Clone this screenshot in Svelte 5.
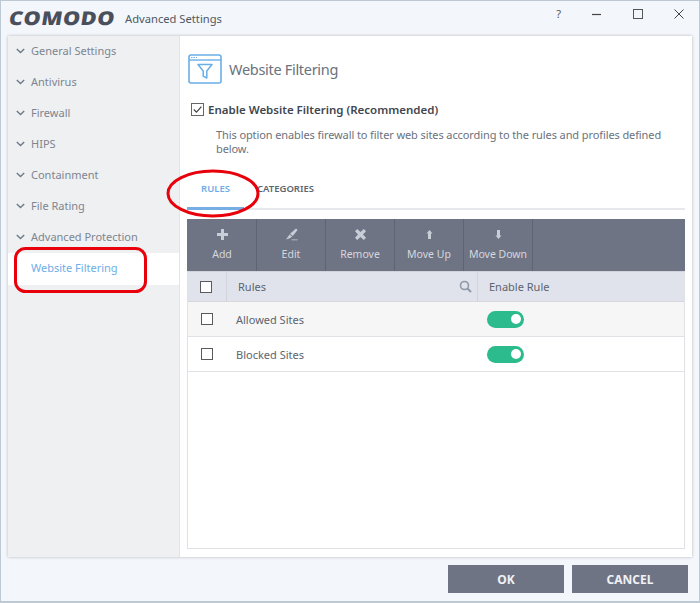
<script>
	const menu = ['General Settings', 'Antivirus', 'Firewall', 'HIPS', 'Containment', 'File Rating', 'Advanced Protection'];
	const tools = [
		{ label: 'Add', icon: 'M5 1h3v4h4v3H8v4H5V8H1V5h4z' },
		{ label: 'Edit', icon: 'M11 .5l1.600 1.400-4.800 6-2.800-2.200zM4.600 6.500l2.600 2.100-2.400 1.700-3.800 1.200zM6.500 11.400h6v.8h-6z' },
		{ label: 'Remove', icon: 'M3.200 1l3.300 3 3.300-3 2.200 2.200-3 3.300 3 3.300-2.200 2.200-3.300-3-3.300 3L1 9.800l3-3.300-3-3.300z' },
		{ label: 'Move Up', icon: 'M6.500 2l3 3.600H8V11H5V5.600H3.500z' },
		{ label: 'Move Down', icon: 'M5 2h3v5.400h1.500l-3 3.600-3-3.600H5z' }
	];
	const rows = ['Allowed Sites', 'Blocked Sites'];
</script>

<div class="window">
	<header class="titlebar">
		<span class="logo">COMODO</span>
		<span class="app-title">Advanced Settings</span>
		<div class="controls">
			<span class="help">?</span>
			<svg width="12" height="12" viewBox="0 0 12 12"><path d="M1 6.500h9" stroke="#444" stroke-width="1.200" /></svg>
			<svg width="12" height="12" viewBox="0 0 12 12"><rect x="1.500" y="1.500" width="9" height="9" fill="none" stroke="#555" stroke-width="1" /></svg>
			<svg width="12" height="12" viewBox="0 0 12 12"><path d="M1.500 1.500l9 9M10.500 1.500l-9 9" stroke="#444" stroke-width="1" /></svg>
		</div>
	</header>

	<div class="panel">
		<nav class="sidebar">
			{#each menu as item}
				<div class="nav-item">
					<svg class="chevron" width="9" height="6" viewBox="0 0 9 6"><path d="M.8 1l3.700 3.600L8.200 1" fill="none" stroke="#6d7a88" stroke-width="1.400" /></svg>
					<span>{item}</span>
				</div>
			{/each}
			<div class="nav-item active"><span>Website Filtering</span></div>
		</nav>

		<main class="content">
			<div class="heading">
				<svg width="34" height="30" viewBox="0 0 34 30">
					<rect x="1" y="1" width="32" height="28" rx="2" fill="#fff" stroke="#6aaee8" stroke-width="1.600" />
					<path d="M1 6h32" stroke="#6aaee8" stroke-width="1.400" />
					<path d="M3 3.500h6" stroke="#6aaee8" stroke-width="1.200" stroke-dasharray="1.500 1" />
					<path d="M10 10.500h14l-5.200 6.500v7l-3.600-1.800V17z" fill="none" stroke="#6aaee8" stroke-width="1.500" stroke-linejoin="round" />
				</svg>
				<h1>Website Filtering</h1>
			</div>

			<div class="enable">
				<svg width="13" height="13" viewBox="0 0 13 13">
					<rect x=".5" y=".5" width="12" height="12" fill="#fff" stroke="#666" />
					<path d="M2.800 6.500l2.700 2.700 4.900-5.600" fill="none" stroke="#444" stroke-width="1.200" />
				</svg>
				<span>Enable Website Filtering (Recommended)</span>
			</div>
			<p class="desc">This option enables firewall to filter web sites according to the rules and profiles defined below.</p>

			<div class="tabs">
				<span class="tab active">RULES</span>
				<span class="tab second">CATEGORIES</span>
			</div>

			<div class="toolbar">
				{#each tools as tool}
					<div class="tool">
						<svg width="13" height="13" viewBox="0 0 13 13"><path d={tool.icon} fill="#c9cdd6" /></svg>
						<span>{tool.label}</span>
					</div>
				{/each}
			</div>

			<div class="table">
				<div class="thead">
					<div class="cell-check"><span class="box"></span></div>
					<div class="cell-name">
						<span>Rules</span>
						<svg width="13" height="13" viewBox="0 0 13 13"><circle cx="5.500" cy="5.500" r="4" fill="none" stroke="#8d99a6" stroke-width="1.600" /><path d="M8.500 8.500l3.500 3.500" stroke="#8d99a6" stroke-width="2" /></svg>
					</div>
					<div class="cell-toggle">Enable Rule</div>
				</div>
				{#each rows as row, i}
					<div class="row" class:shaded={i === 0}>
						<div class="cell-check"><span class="box"></span></div>
						<div class="cell-name">{row}</div>
						<div class="cell-toggle"><span class="switch"><span class="knob"></span></span></div>
					</div>
				{/each}
			</div>
		</main>
	</div>

	<footer class="footer">
		<button type="button">OK</button>
		<button type="button">CANCEL</button>
	</footer>

	<svg class="marks" width="700" height="603" viewBox="0 0 700 603">
		<ellipse cx="213" cy="193.500" rx="45" ry="22.500" fill="none" stroke="#e8000b" stroke-width="3" />
		<rect x="15.500" y="248.500" width="130" height="43" rx="10" fill="none" stroke="#e8000b" stroke-width="3" />
	</svg>
</div>

<style>
	:global(body) {
		margin: 0;
	}

	.window {
		position: relative;
		box-sizing: border-box;
		width: 700px;
		height: 603px;
		display: flex;
		flex-direction: column;
		background: #f3f6fa;
		border: 1px solid #bcc8d2;
		border-bottom-width: 2px;
		font-family: 'Noto Sans', 'Open Sans', sans-serif;
		color: #5c6470;
		overflow: hidden;
	}

	.titlebar {
		height: 34px;
		flex: none;
		display: flex;
		align-items: center;
		padding: 0 9px 0 8px;
	}

	.logo {
		font: 800 19px/1 'Open Sans', 'Liberation Sans', sans-serif;
		letter-spacing: 0.5px;
		color: #4a4f5c;
		transform: skewX(-9deg) scaleX(1.14);
		transform-origin: left center;
		width: 116px;
	}

	.app-title {
		font-size: 11.200px;
		color: #4f5863;
	}

	.controls {
		margin-left: auto;
		display: flex;
		align-items: center;
		gap: 29px;
		padding-right: 5px;
		margin-top: -9px;
	}

	.help {
		font-size: 11px;
		color: #555;
		margin-right: 1px;
	}

	.panel {
		flex: 1;
		min-height: 0;
		margin: 1px 7px 0;
		display: flex;
		background: #fff;
		box-shadow: 0 0 3px rgba(0, 0, 0, 0.25);
	}

	.sidebar {
		width: 171px;
		flex: none;
		background: #eff0f2;
		border-right: 1px solid #e2e4e8;
	}

	.nav-item {
		box-sizing: border-box;
		height: 31px;
		display: flex;
		align-items: center;
		gap: 6px;
		padding: 0 0 2px 8px;
		font-size: 11px;
		color: #7d8590;
	}

	.nav-item.active {
		height: 32px;
		padding: 0 0 4px 23px;
		background: #fff;
		color: #6eaee6;
	}

	.content {
		flex: 1;
		min-width: 0;
		display: flex;
		flex-direction: column;
		padding: 17px 7px 8px 7px;
	}

	.heading {
		display: flex;
		align-items: center;
		gap: 7px;
		height: 31px;
		padding-left: 1px;
	}

	h1 {
		margin: 0;
		font-size: 14.500px;
		letter-spacing: -0.3px;
		font-weight: 400;
		color: #6a727d;
	}

	.enable {
		margin-top: 16px;
		padding-left: 4px;
		display: flex;
		align-items: center;
		gap: 4px;
		font-size: 11.500px;
		font-weight: 600;
		color: #3f4650;
		height: 18px;
	}

	.desc {
		margin: 10px 16px 0 29px;
		font-size: 11px;
		letter-spacing: -0.1px;
		line-height: 14px;
		color: #6a727d;
	}

	.tabs {
		margin-top: 10px;
		height: 44px;
		display: flex;
		box-sizing: border-box;
		border-bottom: 2px solid #e6e8ec;
	}

	.tab {
		height: 44px;
		box-sizing: border-box;
		display: flex;
		align-items: center;
		justify-content: center;
		font-size: 9.500px;
		font-weight: 600;
		color: #5c6470;
	}

	.tab.active {
		width: 57px;
		padding-top: 3px;
		color: #6eaee6;
		border-bottom: 3px solid #76ade2;
	}

	.tab.second {
		margin-left: 13px;
	}

	.toolbar {
		margin-top: 9px;
		height: 52px;
		flex: none;
		display: flex;
		padding-left: 1px;
		background: #6f7485;
	}

	.tool {
		box-sizing: border-box;
		width: 69px;
		display: flex;
		flex-direction: column;
		align-items: center;
		justify-content: center;
		gap: 6px;
		padding-bottom: 2px;
		border-right: 1px solid #5f6474;
		font-size: 10.500px;
		color: #d4d7de;
	}

	.table {
		flex: 1;
		min-height: 0;
		border: 1px solid #e0e1e4;
		border-top: 0;
	}

	.thead,
	.row {
		display: flex;
		align-items: stretch;
		font-size: 11px;
	}

	.thead {
		height: 29px;
		background: #e0e3ec;
		border-top: 1px solid #d0d3da;
		border-bottom: 1px solid #d5d7dc;
		color: #5c6470;
	}

	.row {
		height: 34px;
		background: #fff;
		border-bottom: 1px solid #e1e2e5;
		color: #5c6470;
		--box-left: 13px;
	}

	.row.shaded {
		background: #f6f6f6;
	}

	.cell-check {
		width: 39px;
		flex: none;
		display: flex;
		align-items: center;
		box-sizing: border-box;
		padding-left: var(--box-left, 12px);
	}

	.thead .cell-check,
	.thead .cell-name {
		border-right: 1px solid #d0d3da;
	}

	.cell-name {
		width: 251px;
		flex: none;
		box-sizing: border-box;
		display: flex;
		align-items: center;
		justify-content: space-between;
		padding: 0 5px 0 9px;
	}

	.thead .cell-name {
		padding-left: 11px;
	}

	.cell-toggle {
		flex: 1;
		display: flex;
		align-items: center;
		padding-left: 9px;
	}

	.thead .cell-toggle {
		padding-left: 11px;
	}

	.box {
		display: block;
		box-sizing: border-box;
		width: 12px;
		height: 12px;
		background: #fff;
		border: 1px solid #5a5a5a;
	}

	.switch {
		display: flex;
		align-items: center;
		justify-content: flex-end;
		box-sizing: border-box;
		width: 37px;
		height: 17px;
		padding-right: 3px;
		border-radius: 9px;
		background: #2cbb8c;
	}

	.knob {
		width: 10px;
		height: 10px;
		border-radius: 50%;
		background: #fff;
	}

	.footer {
		height: 44px;
		flex: none;
		display: flex;
		justify-content: flex-end;
		align-items: flex-start;
		gap: 8px;
		padding: 8px 11px 0 0;
		box-sizing: border-box;
	}

	button {
		width: 116px;
		height: 28px;
		border: 0;
		padding: 0;
		background: #6f7485;
		color: #f0f1f4;
		font: 700 12px 'Noto Sans', sans-serif;
	}

	.marks {
		position: absolute;
		left: -1px;
		top: -1px;
		pointer-events: none;
	}
</style>
